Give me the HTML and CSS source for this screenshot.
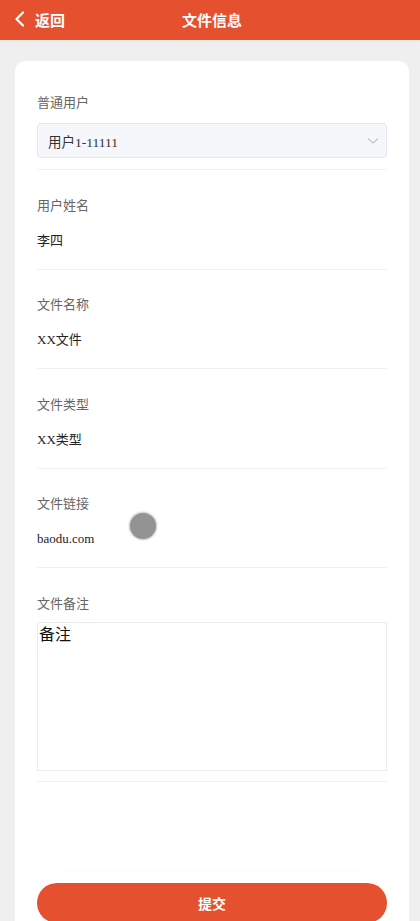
FILE: index.html
```html
<!DOCTYPE html>
<html lang="zh-CN">
<head>
<meta charset="utf-8">
<title>文件信息</title>
<link rel="stylesheet" href="styles.css">
</head>
<body>
<header class="topbar">
  <div class="back">
    <svg class="back-icon" width="12" height="16" viewBox="0 0 12 16"><path d="M9 1.5 L2.5 8 L9 14.5" fill="none" stroke="#fff" stroke-width="2.2" stroke-linecap="round" stroke-linejoin="round"/></svg>
    <span>返回</span>
  </div>
  <div class="title">文件信息</div>
</header>
<main class="card">
  <section class="row row-first">
    <div class="label">普通用户</div>
    <div class="select">
      <span class="select-text">用户1-11111</span>
      <svg width="12" height="8" viewBox="0 0 12 8"><path d="M1 1.5 L6 6 L11 1.5" fill="none" stroke="#c0c4cc" stroke-width="1.3"/></svg>
    </div>
  </section>
  <section class="row">
    <div class="label">用户姓名</div>
    <div class="value">李四</div>
  </section>
  <section class="row">
    <div class="label">文件名称</div>
    <div class="value">XX文件</div>
  </section>
  <section class="row">
    <div class="label">文件类型</div>
    <div class="value">XX类型</div>
  </section>
  <section class="row">
    <div class="label">文件链接</div>
    <div class="value">baodu.com</div>
  </section>
  <section class="row row-last">
    <div class="label">文件备注</div>
    <div class="textarea">备注</div>
  </section>
  <div class="footer">
    <div class="footer-line"></div>
    <button class="submit">提交</button>
  </div>
</main>
<div class="touch-dot"></div>
</body>
</html>
```
FILE: styles.css
```css
* { box-sizing: border-box; }
html, body { margin: 0; padding: 0; }
body {
  background: #efefef;
  font-family: "Noto Sans CJK SC", "Noto Sans", sans-serif;
  height: 921px;
  overflow: hidden;
  position: relative;
}
.topbar {
  height: 40px;
  background: #e5502f;
  position: relative;
  display: flex;
  align-items: center;
  justify-content: center;
  color: #fff;
  box-shadow: 0 1px 2px rgba(0,0,0,0.06);
}
.back {
  position: absolute;
  left: 14px;
  top: 0;
  height: 38px;
  display: flex;
  align-items: center;
  gap: 9px;
  font-size: 15px;
  font-weight: 700;
}
.back-icon { display: block; }
.title {
  font-size: 15px;
  font-weight: 700;
  margin-top: -2px;
  padding-left: 4px;
}
.card {
  margin: 21px 11px 0 15px;
  background: #fff;
  border-radius: 10px;
  padding: 0 22px;
  min-height: 900px;
}
.row {
  padding: 24.5px 0 18px;
  border-bottom: 1px solid #f0f0f0;
}
.row-first { padding: 31px 0 11px; }
.row-last { padding: 24.5px 0 10px; }
.label {
  font-size: 13px;
  line-height: 20px;
  color: #666;
}
.value {
  margin-top: 16px;
  font-size: 13px;
  line-height: 20px;
  color: #222;
  font-family: "Liberation Serif", "Noto Sans CJK SC", serif;
}
.select {
  margin-top: 11px;
  height: 35px;
  background: #f5f7fa;
  border: 1px solid #e4e7ed;
  border-radius: 4px;
  display: flex;
  align-items: center;
  justify-content: space-between;
  padding: 0 7px 0 10px;
}
.select-text {
  font-family: "Liberation Serif", "Noto Sans CJK SC", serif;
  font-size: 13.5px;
  color: #333;
}
.textarea {
  margin-top: 9px;
  height: 149px;
  border: 1.5px solid #ececec;
  font-size: 16px;
  line-height: 18px;
  color: #111;
  padding: 1px 1px 0;
}
.footer {
  padding-top: 88px;
  display: flex;
  flex-direction: column;
  align-items: center;
}
.footer-line {
  width: 290px;
  height: 1px;
  background: #fafafa;
  margin-bottom: 12px;
}
.submit {
  width: 100%;
  height: 40px;
  border: none;
  border-radius: 20px;
  background: #e5502f;
  color: #fff;
  font-family: "Noto Sans CJK SC", sans-serif;
  font-size: 14px;
  font-weight: 700;
  padding: 0;
}
.touch-dot {
  position: absolute;
  left: 130px;
  top: 513px;
  width: 26px;
  height: 26px;
  border-radius: 50%;
  background: #939393;
  box-shadow: 0 0 2px 1px #c4c4c4;
}
```
